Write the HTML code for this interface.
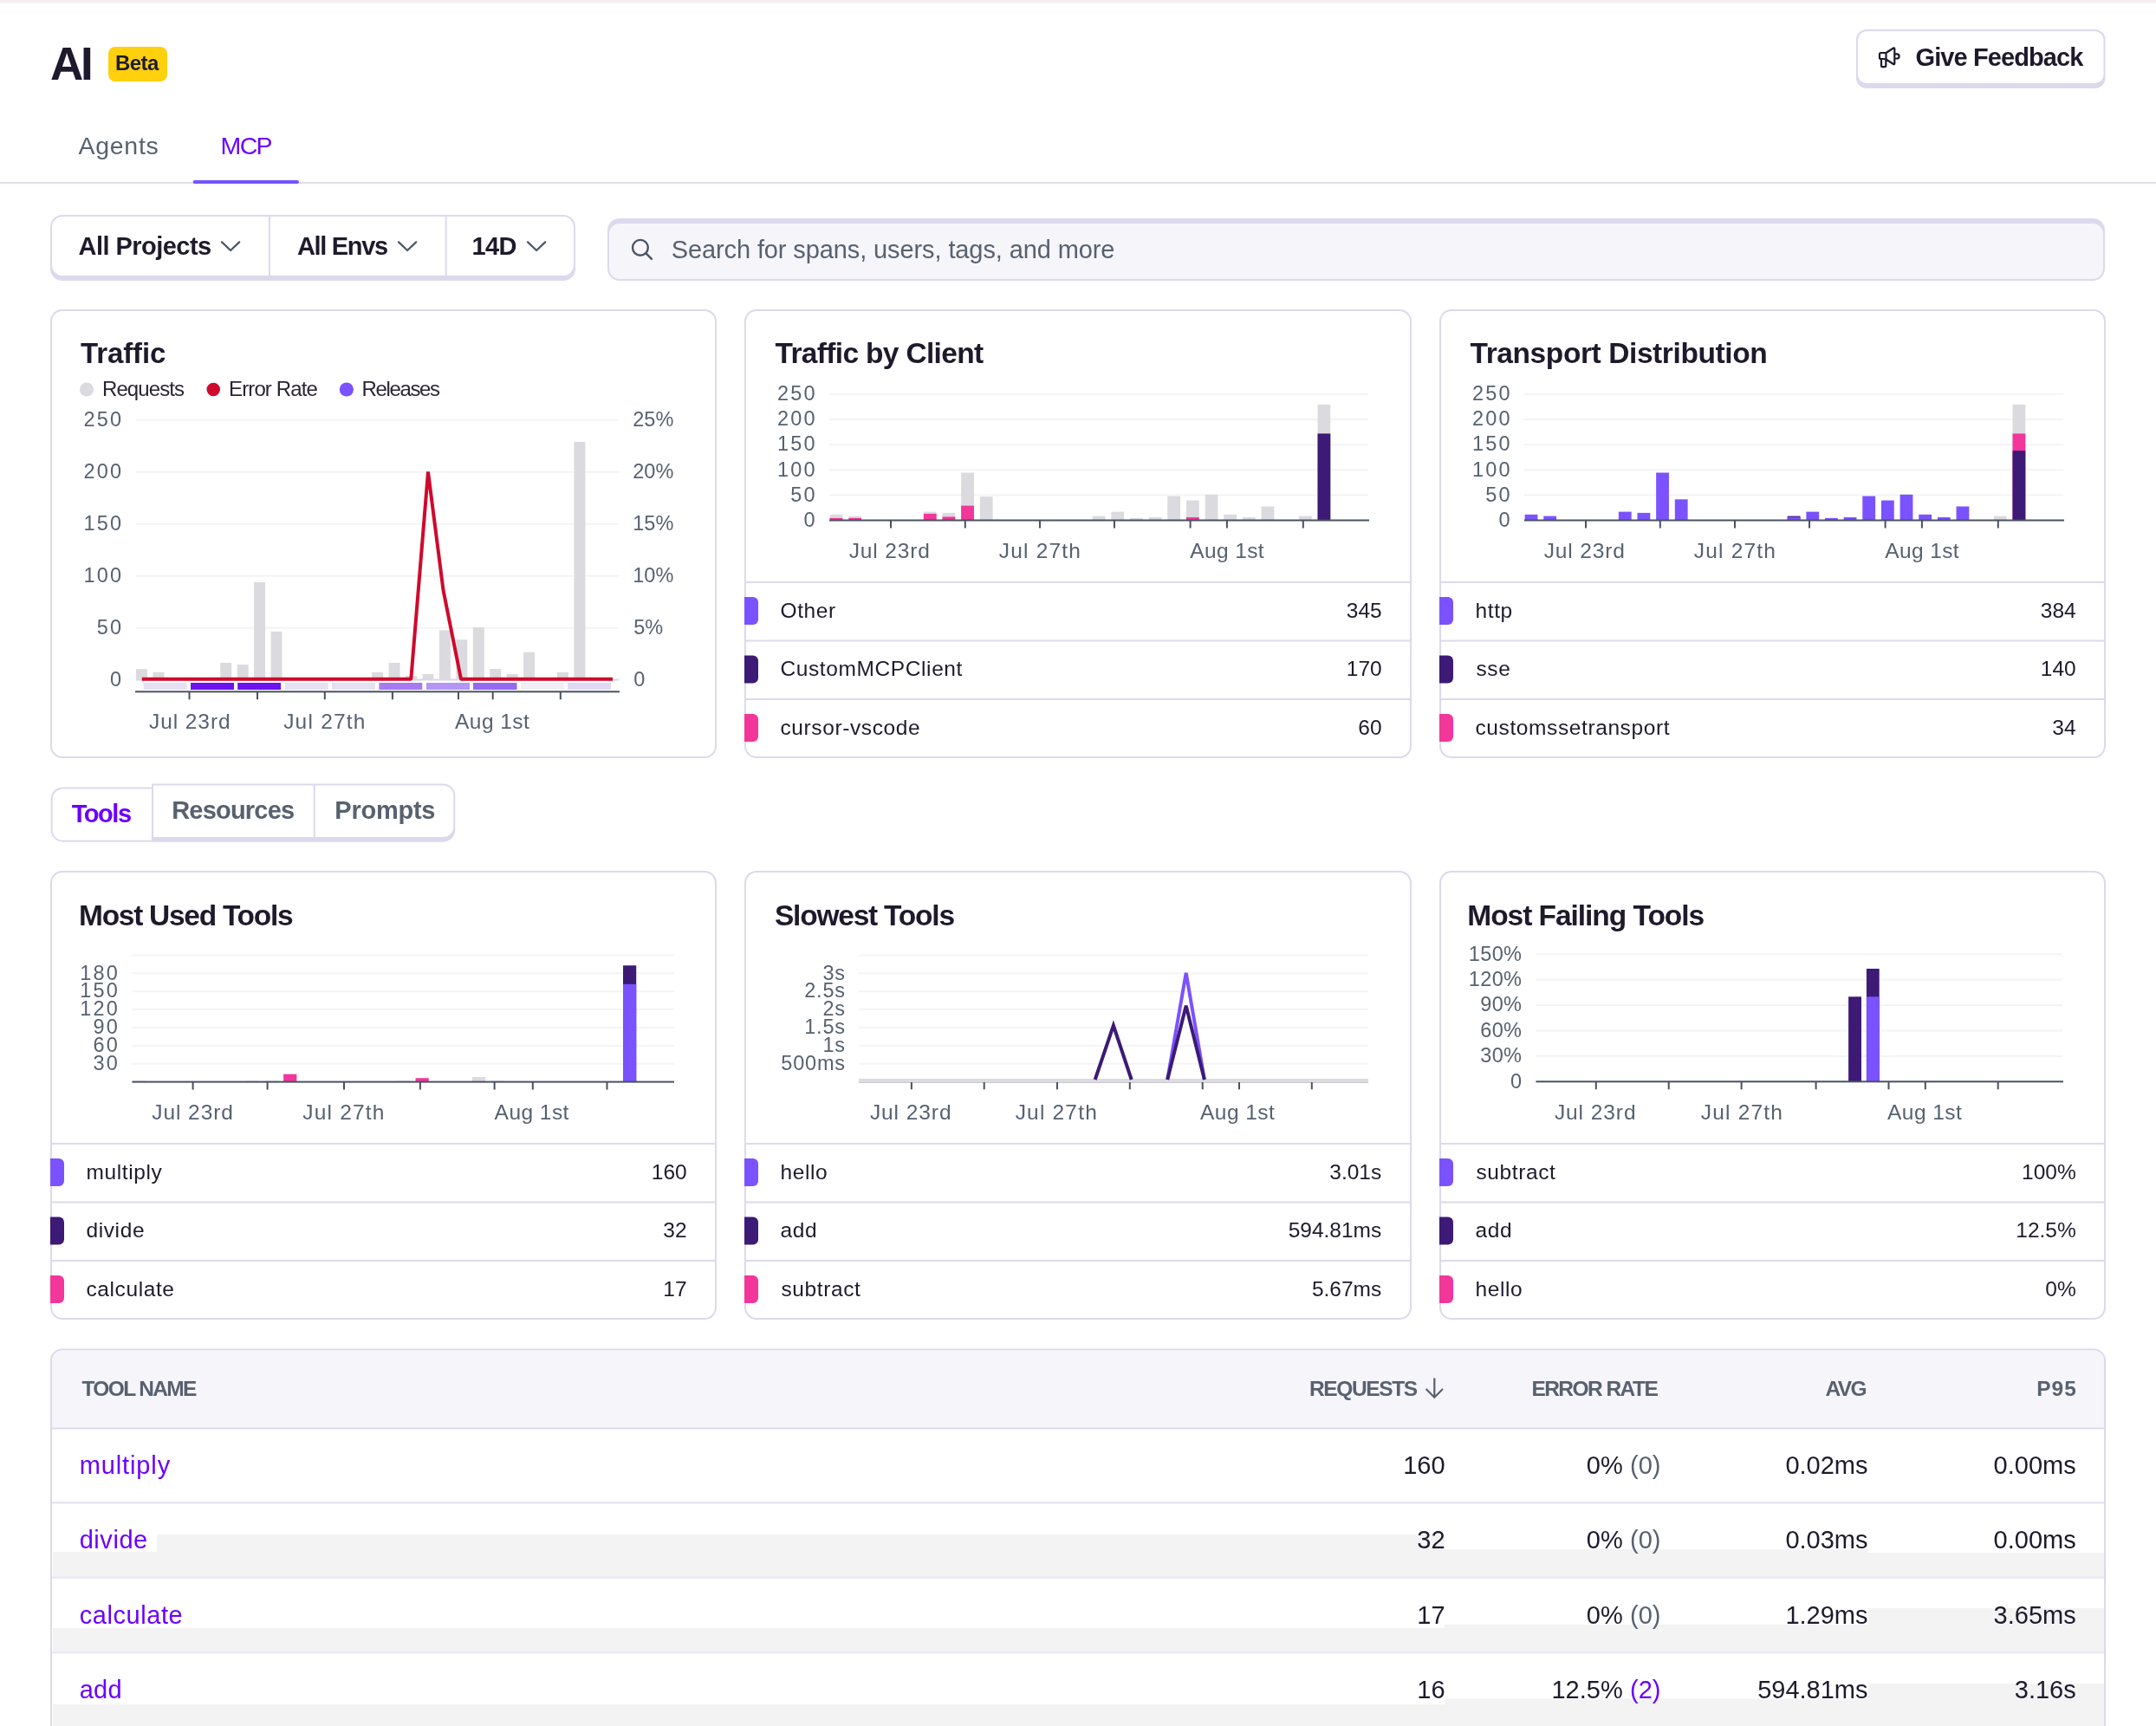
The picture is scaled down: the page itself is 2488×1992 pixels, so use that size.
<!DOCTYPE html>
<html><head><meta charset="utf-8"><title>AI MCP</title>
<style>
html,body{margin:0;padding:0;background:#fff;}
body{width:2488px;height:1992px;overflow:hidden;position:relative;font-family:"Liberation Sans", sans-serif;}
svg.bg{position:absolute;left:0;top:0;}
.t{position:absolute;left:0;top:0;width:2488px;height:1992px;will-change:transform;}
.t div{position:absolute;white-space:pre;}
</style></head><body>
<svg class="bg" width="2488" height="1992" viewBox="0 0 2488 1992">
<rect x="0.00" y="0.00" width="2488.00" height="2.00" rx="0" fill="#F8ECF0"/>
<rect x="0.00" y="2.00" width="2488.00" height="2.00" rx="0" fill="#F4F4F5"/>
<rect x="125.00" y="54.00" width="68.00" height="40.00" rx="8" fill="#FFD00E"/>
<rect x="2142.00" y="34.00" width="287.50" height="68.00" rx="12" fill="#DDD9EC"/>
<rect x="2144.00" y="36.00" width="283.50" height="60.00" rx="10" fill="#FFFFFF"/>
<path d="M2170.5,61 H2176.5 V68 H2170.5 A1.5,1.5 0 0 1 2169,66.5 V62.5 A1.5,1.5 0 0 1 2170.5,61 Z M2171,68 V76 A1.2,1.2 0 0 0 2172.2,77.2 H2175.1 A1.2,1.2 0 0 0 2176.3,76 V68 M2176.5,61 L2185,55.5 A0.9,0.9 0 0 1 2186.3,56.3 V73.3 A0.9,0.9 0 0 1 2185,74 L2176.5,68.5 M2186.3,62.3 H2189 A2.6,2.6 0 0 1 2189,67.5 H2186.3" fill="none" stroke="#1E1A2B" stroke-width="2.2" stroke-linejoin="round" stroke-linecap="round"/>
<rect x="0.00" y="210.00" width="2488.00" height="2.00" rx="0" fill="#E2DFEA"/>
<rect x="222.60" y="208.00" width="122.40" height="4.00" rx="2" fill="#7553FF"/>
<rect x="58.00" y="248.00" width="606.00" height="76.00" rx="14" fill="#DDD9EC"/>
<rect x="60.00" y="250.00" width="602.00" height="68.00" rx="12" fill="#FFFFFF"/>
<rect x="310.00" y="250.00" width="2.00" height="68.00" rx="0" fill="#DDD9EC"/>
<rect x="513.70" y="250.00" width="2.00" height="68.00" rx="0" fill="#DDD9EC"/>
<path d="M256.0,279.4 L266.1,289 L276.20000000000005,279.4" fill="none" stroke="#4F5866" stroke-width="2.3" stroke-linecap="round" stroke-linejoin="round"/>
<path d="M460.0,279.4 L470.1,289 L480.20000000000005,279.4" fill="none" stroke="#4F5866" stroke-width="2.3" stroke-linecap="round" stroke-linejoin="round"/>
<path d="M609.0,279.4 L619.1,289 L629.2,279.4" fill="none" stroke="#4F5866" stroke-width="2.3" stroke-linecap="round" stroke-linejoin="round"/>
<rect x="701.00" y="252.00" width="1728.00" height="72.00" rx="14" fill="#DDD9EC"/>
<rect x="703.00" y="258.00" width="1724.00" height="64.00" rx="12" fill="#F6F5FA"/>
<path d="M738.9,285.8 m-8.9,0 a8.9,8.9 0 1 0 17.8,0 a8.9,8.9 0 1 0 -17.8,0 M745.2,292.1 L752,298.9" fill="none" stroke="#4A5361" stroke-width="2.4" stroke-linecap="round"/>
<rect x="58.00" y="357.00" width="769.00" height="518.00" rx="14" fill="#DDD9EC"/>
<rect x="60.00" y="359.00" width="765.00" height="514.00" rx="12" fill="#FFFFFF"/>
<rect x="58.00" y="1005.00" width="769.00" height="518.00" rx="14" fill="#DDD9EC"/>
<rect x="60.00" y="1007.00" width="765.00" height="514.00" rx="12" fill="#FFFFFF"/>
<rect x="859.00" y="357.00" width="770.00" height="518.00" rx="14" fill="#DDD9EC"/>
<rect x="861.00" y="359.00" width="766.00" height="514.00" rx="12" fill="#FFFFFF"/>
<rect x="859.00" y="1005.00" width="770.00" height="518.00" rx="14" fill="#DDD9EC"/>
<rect x="861.00" y="1007.00" width="766.00" height="514.00" rx="12" fill="#FFFFFF"/>
<rect x="1661.00" y="357.00" width="769.00" height="518.00" rx="14" fill="#DDD9EC"/>
<rect x="1663.00" y="359.00" width="765.00" height="514.00" rx="12" fill="#FFFFFF"/>
<rect x="1661.00" y="1005.00" width="769.00" height="518.00" rx="14" fill="#DDD9EC"/>
<rect x="1663.00" y="1007.00" width="765.00" height="514.00" rx="12" fill="#FFFFFF"/>
<circle cx="100.0" cy="449.5" r="8.0" fill="#DBDBDF"/>
<circle cx="246.25" cy="449.5" r="7.75" fill="#CF0A2C"/>
<circle cx="399.9" cy="449.5" r="8.099999999999994" fill="#7B52FF"/>
<rect x="157.00" y="483.70" width="557.00" height="2.00" rx="0" fill="#F4F4F7"/>
<rect x="157.00" y="543.70" width="557.00" height="2.00" rx="0" fill="#F4F4F7"/>
<rect x="157.00" y="603.70" width="557.00" height="2.00" rx="0" fill="#F4F4F7"/>
<rect x="157.00" y="663.70" width="557.00" height="2.00" rx="0" fill="#F4F4F7"/>
<rect x="157.00" y="723.70" width="557.00" height="2.00" rx="0" fill="#F4F4F7"/>
<rect x="157.00" y="783.50" width="557.00" height="2.00" rx="0" fill="#D9D9DE"/>
<rect x="157.00" y="772.20" width="13.00" height="12.30" rx="0" fill="#DBDBDF"/>
<rect x="176.44" y="775.80" width="13.00" height="8.70" rx="0" fill="#DBDBDF"/>
<rect x="254.20" y="765.00" width="13.00" height="19.50" rx="0" fill="#DBDBDF"/>
<rect x="273.64" y="766.98" width="13.00" height="17.52" rx="0" fill="#DBDBDF"/>
<rect x="293.08" y="672.00" width="13.00" height="112.50" rx="0" fill="#DBDBDF"/>
<rect x="312.52" y="728.82" width="13.00" height="55.68" rx="0" fill="#DBDBDF"/>
<rect x="429.16" y="775.80" width="13.00" height="8.70" rx="0" fill="#DBDBDF"/>
<rect x="448.60" y="765.00" width="13.00" height="19.50" rx="0" fill="#DBDBDF"/>
<rect x="468.04" y="780.00" width="13.00" height="4.50" rx="0" fill="#DBDBDF"/>
<rect x="487.48" y="778.02" width="13.00" height="6.48" rx="0" fill="#DBDBDF"/>
<rect x="506.92" y="727.38" width="13.00" height="57.12" rx="0" fill="#DBDBDF"/>
<rect x="526.36" y="738.18" width="13.00" height="46.32" rx="0" fill="#DBDBDF"/>
<rect x="545.80" y="724.02" width="13.00" height="60.48" rx="0" fill="#DBDBDF"/>
<rect x="565.24" y="772.02" width="13.00" height="12.48" rx="0" fill="#DBDBDF"/>
<rect x="584.68" y="778.02" width="13.00" height="6.48" rx="0" fill="#DBDBDF"/>
<rect x="604.12" y="752.70" width="13.00" height="31.80" rx="0" fill="#DBDBDF"/>
<rect x="643.00" y="775.80" width="13.00" height="8.70" rx="0" fill="#DBDBDF"/>
<rect x="662.44" y="510.00" width="13.00" height="274.50" rx="0" fill="#DBDBDF"/>
<rect x="165.60" y="788.00" width="50.00" height="8.00" rx="0" fill="#E6E0F3"/>
<rect x="220.00" y="788.00" width="50.00" height="8.00" rx="0" fill="#6E12F0"/>
<rect x="274.20" y="788.00" width="49.90" height="8.00" rx="0" fill="#6E12F0"/>
<rect x="328.80" y="788.00" width="49.90" height="8.00" rx="0" fill="#E6E0F3"/>
<rect x="383.00" y="788.00" width="50.00" height="8.00" rx="0" fill="#E6E0F3"/>
<rect x="437.40" y="788.00" width="49.90" height="8.00" rx="0" fill="#A77AF2"/>
<rect x="492.00" y="788.00" width="50.00" height="8.00" rx="0" fill="#B596F4"/>
<rect x="546.00" y="788.00" width="50.50" height="8.00" rx="0" fill="#956AF1"/>
<rect x="601.00" y="788.00" width="50.00" height="8.00" rx="0" fill="#F1EEF7"/>
<rect x="655.00" y="788.00" width="50.00" height="8.00" rx="0" fill="#E2D8F6"/>
<rect x="156.00" y="797.30" width="559.00" height="2.00" rx="0" fill="#4A5260"/>
<rect x="217.50" y="798.30" width="2.00" height="9.00" rx="0" fill="#4A5260"/>
<rect x="296.00" y="798.30" width="2.00" height="9.00" rx="0" fill="#4A5260"/>
<rect x="373.80" y="798.30" width="2.00" height="9.00" rx="0" fill="#4A5260"/>
<rect x="451.90" y="798.30" width="2.00" height="9.00" rx="0" fill="#4A5260"/>
<rect x="528.00" y="798.30" width="2.00" height="9.00" rx="0" fill="#4A5260"/>
<rect x="567.70" y="798.30" width="2.00" height="9.00" rx="0" fill="#4A5260"/>
<rect x="645.80" y="798.30" width="2.00" height="9.00" rx="0" fill="#4A5260"/>
<path d="M163.8,783.8 L474.3,783.8 L494,544.5 L511.5,681 L532,783.8 L707,783.8" fill="none" stroke="#CF0A2C" stroke-width="4" stroke-linejoin="bevel"/>
<rect x="957.00" y="454.00" width="622.00" height="2.00" rx="0" fill="#F4F4F7"/>
<rect x="957.00" y="483.10" width="622.00" height="2.00" rx="0" fill="#F4F4F7"/>
<rect x="957.00" y="512.20" width="622.00" height="2.00" rx="0" fill="#F4F4F7"/>
<rect x="957.00" y="541.30" width="622.00" height="2.00" rx="0" fill="#F4F4F7"/>
<rect x="957.00" y="570.40" width="622.00" height="2.00" rx="0" fill="#F4F4F7"/>
<rect x="957.60" y="593.81" width="14.80" height="6.69" rx="0" fill="#DBDBDF"/>
<rect x="957.60" y="597.88" width="14.80" height="2.62" rx="0" fill="#F2369A"/>
<rect x="979.25" y="595.61" width="14.80" height="4.89" rx="0" fill="#DBDBDF"/>
<rect x="979.25" y="597.88" width="14.80" height="2.62" rx="0" fill="#F2369A"/>
<rect x="1065.85" y="590.61" width="14.80" height="9.89" rx="0" fill="#DBDBDF"/>
<rect x="1065.85" y="592.93" width="14.80" height="7.57" rx="0" fill="#F2369A"/>
<rect x="1087.50" y="591.89" width="14.80" height="8.61" rx="0" fill="#DBDBDF"/>
<rect x="1087.50" y="596.43" width="14.80" height="4.07" rx="0" fill="#F2369A"/>
<rect x="1109.15" y="545.50" width="14.80" height="55.00" rx="0" fill="#DBDBDF"/>
<rect x="1109.15" y="583.62" width="14.80" height="16.88" rx="0" fill="#F2369A"/>
<rect x="1130.80" y="573.15" width="14.80" height="27.35" rx="0" fill="#DBDBDF"/>
<rect x="1260.70" y="595.61" width="14.80" height="4.89" rx="0" fill="#DBDBDF"/>
<rect x="1282.35" y="590.61" width="14.80" height="9.89" rx="0" fill="#DBDBDF"/>
<rect x="1304.00" y="597.88" width="14.80" height="2.62" rx="0" fill="#DBDBDF"/>
<rect x="1325.65" y="597.01" width="14.80" height="3.49" rx="0" fill="#DBDBDF"/>
<rect x="1347.30" y="572.56" width="14.80" height="27.94" rx="0" fill="#DBDBDF"/>
<rect x="1368.95" y="577.51" width="14.80" height="22.99" rx="0" fill="#DBDBDF"/>
<rect x="1368.95" y="597.01" width="14.80" height="3.49" rx="0" fill="#F2369A"/>
<rect x="1390.60" y="570.82" width="14.80" height="29.68" rx="0" fill="#DBDBDF"/>
<rect x="1412.25" y="593.81" width="14.80" height="6.69" rx="0" fill="#DBDBDF"/>
<rect x="1433.90" y="597.01" width="14.80" height="3.49" rx="0" fill="#DBDBDF"/>
<rect x="1455.55" y="584.50" width="14.80" height="16.00" rx="0" fill="#DBDBDF"/>
<rect x="1498.85" y="595.61" width="14.80" height="4.89" rx="0" fill="#DBDBDF"/>
<rect x="1520.50" y="466.93" width="14.80" height="133.57" rx="0" fill="#DBDBDF"/>
<rect x="1520.50" y="500.40" width="14.80" height="100.10" rx="0" fill="#3C1A75"/>
<rect x="957.00" y="599.50" width="623.00" height="2.00" rx="0" fill="#4A5260"/>
<rect x="1027.00" y="600.50" width="2.00" height="9.00" rx="0" fill="#4A5260"/>
<rect x="1112.80" y="600.50" width="2.00" height="9.00" rx="0" fill="#4A5260"/>
<rect x="1199.00" y="600.50" width="2.00" height="9.00" rx="0" fill="#4A5260"/>
<rect x="1285.00" y="600.50" width="2.00" height="9.00" rx="0" fill="#4A5260"/>
<rect x="1372.60" y="600.50" width="2.00" height="9.00" rx="0" fill="#4A5260"/>
<rect x="1414.90" y="600.50" width="2.00" height="9.00" rx="0" fill="#4A5260"/>
<rect x="1502.80" y="600.50" width="2.00" height="9.00" rx="0" fill="#4A5260"/>
<rect x="861.00" y="671.00" width="766.00" height="2.00" rx="0" fill="#DDD9EC"/>
<path d="M859,689.0 h10 a6,6 0 0 1 6,6 v20 a6,6 0 0 1 -6,6 h-10 z" fill="#7B52FF" />
<rect x="861.00" y="738.50" width="766.00" height="2.00" rx="0" fill="#DDD9EC"/>
<path d="M859,756.5 h10 a6,6 0 0 1 6,6 v20 a6,6 0 0 1 -6,6 h-10 z" fill="#3C1A75" />
<rect x="861.00" y="806.00" width="766.00" height="2.00" rx="0" fill="#DDD9EC"/>
<path d="M859,824.0 h10 a6,6 0 0 1 6,6 v20 a6,6 0 0 1 -6,6 h-10 z" fill="#F2369A" />
<rect x="1759.00" y="454.00" width="622.00" height="2.00" rx="0" fill="#F4F4F7"/>
<rect x="1759.00" y="483.10" width="622.00" height="2.00" rx="0" fill="#F4F4F7"/>
<rect x="1759.00" y="512.20" width="622.00" height="2.00" rx="0" fill="#F4F4F7"/>
<rect x="1759.00" y="541.30" width="622.00" height="2.00" rx="0" fill="#F4F4F7"/>
<rect x="1759.00" y="570.40" width="622.00" height="2.00" rx="0" fill="#F4F4F7"/>
<rect x="1759.60" y="593.81" width="14.80" height="6.69" rx="0" fill="#7B52FF"/>
<rect x="1781.25" y="595.61" width="14.80" height="4.89" rx="0" fill="#7B52FF"/>
<rect x="1867.85" y="590.61" width="14.80" height="9.89" rx="0" fill="#7B52FF"/>
<rect x="1889.50" y="591.89" width="14.80" height="8.61" rx="0" fill="#7B52FF"/>
<rect x="1911.15" y="545.50" width="14.80" height="55.00" rx="0" fill="#7B52FF"/>
<rect x="1932.80" y="576.29" width="14.80" height="24.21" rx="0" fill="#7B52FF"/>
<rect x="2062.70" y="595.61" width="14.80" height="4.89" rx="0" fill="#3C1A75"/>
<rect x="2062.70" y="596.72" width="14.80" height="3.78" rx="0" fill="#7B52FF"/>
<rect x="2084.35" y="590.61" width="14.80" height="9.89" rx="0" fill="#7B52FF"/>
<rect x="2106.00" y="597.88" width="14.80" height="2.62" rx="0" fill="#7B52FF"/>
<rect x="2127.65" y="597.01" width="14.80" height="3.49" rx="0" fill="#7B52FF"/>
<rect x="2149.30" y="572.56" width="14.80" height="27.94" rx="0" fill="#7B52FF"/>
<rect x="2170.95" y="577.51" width="14.80" height="22.99" rx="0" fill="#7B52FF"/>
<rect x="2192.60" y="570.82" width="14.80" height="29.68" rx="0" fill="#7B52FF"/>
<rect x="2214.25" y="593.81" width="14.80" height="6.69" rx="0" fill="#7B52FF"/>
<rect x="2235.90" y="597.01" width="14.80" height="3.49" rx="0" fill="#7B52FF"/>
<rect x="2257.55" y="584.50" width="14.80" height="16.00" rx="0" fill="#7B52FF"/>
<rect x="2300.85" y="595.61" width="14.80" height="4.89" rx="0" fill="#DBDBDF"/>
<rect x="2322.50" y="466.93" width="14.80" height="133.57" rx="0" fill="#DBDBDF"/>
<rect x="2322.50" y="500.40" width="14.80" height="100.10" rx="0" fill="#F2369A"/>
<rect x="2322.50" y="520.18" width="14.80" height="80.32" rx="0" fill="#3C1A75"/>
<rect x="1759.00" y="599.50" width="623.00" height="2.00" rx="0" fill="#4A5260"/>
<rect x="1829.00" y="600.50" width="2.00" height="9.00" rx="0" fill="#4A5260"/>
<rect x="1914.80" y="600.50" width="2.00" height="9.00" rx="0" fill="#4A5260"/>
<rect x="2001.00" y="600.50" width="2.00" height="9.00" rx="0" fill="#4A5260"/>
<rect x="2087.00" y="600.50" width="2.00" height="9.00" rx="0" fill="#4A5260"/>
<rect x="2174.60" y="600.50" width="2.00" height="9.00" rx="0" fill="#4A5260"/>
<rect x="2216.90" y="600.50" width="2.00" height="9.00" rx="0" fill="#4A5260"/>
<rect x="2304.80" y="600.50" width="2.00" height="9.00" rx="0" fill="#4A5260"/>
<rect x="1663.00" y="671.00" width="765.00" height="2.00" rx="0" fill="#DDD9EC"/>
<path d="M1661,689.0 h10 a6,6 0 0 1 6,6 v20 a6,6 0 0 1 -6,6 h-10 z" fill="#7B52FF" />
<rect x="1663.00" y="738.50" width="765.00" height="2.00" rx="0" fill="#DDD9EC"/>
<path d="M1661,756.5 h10 a6,6 0 0 1 6,6 v20 a6,6 0 0 1 -6,6 h-10 z" fill="#3C1A75" />
<rect x="1663.00" y="806.00" width="765.00" height="2.00" rx="0" fill="#DDD9EC"/>
<path d="M1661,824.0 h10 a6,6 0 0 1 6,6 v20 a6,6 0 0 1 -6,6 h-10 z" fill="#F2369A" />
<path d="M177,908.5 H72.6 a14,14 0 0 0 -14,14 V957.7 a14,14 0 0 0 14,14 H177 Z" fill="#DDD9EC" />
<path d="M175,910.5 H72.6 a12,12 0 0 0 -12,12 V957.7 a12,12 0 0 0 12,12 H175 Z" fill="#FFFFFF" />
<path d="M175,904.4 H511.3 a14,14 0 0 1 14,14 V957.7 a14,14 0 0 1 -14,14 H175 Z" fill="#DDD9EC" />
<path d="M177,906.4 H511.3 a12,12 0 0 1 12,12 V954 a12,12 0 0 1 -12,12 H177 Z" fill="#FFFFFF" />
<rect x="361.70" y="906.00" width="2.00" height="60.00" rx="0" fill="#DDD9EC"/>
<rect x="152.40" y="1101.44" width="625.30" height="2.00" rx="0" fill="#F4F4F7"/>
<rect x="152.40" y="1122.32" width="625.30" height="2.00" rx="0" fill="#F4F4F7"/>
<rect x="152.40" y="1143.20" width="625.30" height="2.00" rx="0" fill="#F4F4F7"/>
<rect x="152.40" y="1164.08" width="625.30" height="2.00" rx="0" fill="#F4F4F7"/>
<rect x="152.40" y="1184.96" width="625.30" height="2.00" rx="0" fill="#F4F4F7"/>
<rect x="152.40" y="1205.84" width="625.30" height="2.00" rx="0" fill="#F4F4F7"/>
<rect x="152.40" y="1226.72" width="625.30" height="2.00" rx="0" fill="#F4F4F7"/>
<rect x="153.00" y="1247.56" width="15.20" height="1.04" rx="0" fill="#DBDBDF"/>
<rect x="283.62" y="1247.56" width="15.20" height="1.04" rx="0" fill="#DBDBDF"/>
<rect x="305.39" y="1247.56" width="15.20" height="1.04" rx="0" fill="#DBDBDF"/>
<rect x="327.16" y="1239.69" width="15.20" height="8.91" rx="0" fill="#F2369A"/>
<rect x="457.78" y="1247.56" width="15.20" height="1.04" rx="0" fill="#DBDBDF"/>
<rect x="479.55" y="1244.22" width="15.20" height="4.38" rx="0" fill="#F2369A"/>
<rect x="544.86" y="1243.03" width="15.20" height="5.57" rx="0" fill="#DBDBDF"/>
<rect x="566.63" y="1247.56" width="15.20" height="1.04" rx="0" fill="#DBDBDF"/>
<rect x="719.02" y="1114.27" width="15.20" height="134.33" rx="0" fill="#3C1A75"/>
<rect x="719.02" y="1135.85" width="15.20" height="112.75" rx="0" fill="#7B52FF"/>
<rect x="152.40" y="1247.60" width="625.60" height="2.00" rx="0" fill="#4A5260"/>
<rect x="221.60" y="1248.60" width="2.00" height="9.00" rx="0" fill="#4A5260"/>
<rect x="307.60" y="1248.60" width="2.00" height="9.00" rx="0" fill="#4A5260"/>
<rect x="396.00" y="1248.60" width="2.00" height="9.00" rx="0" fill="#4A5260"/>
<rect x="483.90" y="1248.60" width="2.00" height="9.00" rx="0" fill="#4A5260"/>
<rect x="569.60" y="1248.60" width="2.00" height="9.00" rx="0" fill="#4A5260"/>
<rect x="613.80" y="1248.60" width="2.00" height="9.00" rx="0" fill="#4A5260"/>
<rect x="699.50" y="1248.60" width="2.00" height="9.00" rx="0" fill="#4A5260"/>
<rect x="60.00" y="1319.00" width="765.00" height="2.00" rx="0" fill="#DDD9EC"/>
<path d="M58,1337.0 h10 a6,6 0 0 1 6,6 v20 a6,6 0 0 1 -6,6 h-10 z" fill="#7B52FF" />
<rect x="60.00" y="1386.50" width="765.00" height="2.00" rx="0" fill="#DDD9EC"/>
<path d="M58,1404.5 h10 a6,6 0 0 1 6,6 v20 a6,6 0 0 1 -6,6 h-10 z" fill="#3C1A75" />
<rect x="60.00" y="1454.00" width="765.00" height="2.00" rx="0" fill="#DDD9EC"/>
<path d="M58,1472.0 h10 a6,6 0 0 1 6,6 v20 a6,6 0 0 1 -6,6 h-10 z" fill="#F2369A" />
<rect x="991.00" y="1101.44" width="588.00" height="2.00" rx="0" fill="#F4F4F7"/>
<rect x="991.00" y="1122.32" width="588.00" height="2.00" rx="0" fill="#F4F4F7"/>
<rect x="991.00" y="1143.20" width="588.00" height="2.00" rx="0" fill="#F4F4F7"/>
<rect x="991.00" y="1164.08" width="588.00" height="2.00" rx="0" fill="#F4F4F7"/>
<rect x="991.00" y="1184.96" width="588.00" height="2.00" rx="0" fill="#F4F4F7"/>
<rect x="991.00" y="1205.84" width="588.00" height="2.00" rx="0" fill="#F4F4F7"/>
<rect x="991.00" y="1226.72" width="588.00" height="2.00" rx="0" fill="#F4F4F7"/>
<rect x="991.00" y="1247.30" width="588.00" height="2.00" rx="0" fill="#4A5260"/>
<rect x="1050.90" y="1248.30" width="2.00" height="9.00" rx="0" fill="#4A5260"/>
<rect x="1134.70" y="1248.30" width="2.00" height="9.00" rx="0" fill="#4A5260"/>
<rect x="1219.00" y="1248.30" width="2.00" height="9.00" rx="0" fill="#4A5260"/>
<rect x="1302.80" y="1248.30" width="2.00" height="9.00" rx="0" fill="#4A5260"/>
<rect x="1386.70" y="1248.30" width="2.00" height="9.00" rx="0" fill="#4A5260"/>
<rect x="1429.00" y="1248.30" width="2.00" height="9.00" rx="0" fill="#4A5260"/>
<rect x="1512.80" y="1248.30" width="2.00" height="9.00" rx="0" fill="#4A5260"/>
<rect x="991.00" y="1245.00" width="588.00" height="4.00" rx="0" fill="#DCDCE0"/>
<path d="M1347.2,1246 L1368.7,1122.8 L1389.9,1246" fill="none" stroke="#7B52FF" stroke-width="4" />
<path d="M1263.7,1246 L1284.9,1183.5 L1305.7,1246" fill="none" stroke="#3C1A75" stroke-width="4" />
<path d="M1347.2,1246 L1368.7,1160.7 L1389.9,1246" fill="none" stroke="#3C1A75" stroke-width="4" />
<rect x="861.00" y="1319.00" width="766.00" height="2.00" rx="0" fill="#DDD9EC"/>
<path d="M859,1337.0 h10 a6,6 0 0 1 6,6 v20 a6,6 0 0 1 -6,6 h-10 z" fill="#7B52FF" />
<rect x="861.00" y="1386.50" width="766.00" height="2.00" rx="0" fill="#DDD9EC"/>
<path d="M859,1404.5 h10 a6,6 0 0 1 6,6 v20 a6,6 0 0 1 -6,6 h-10 z" fill="#3C1A75" />
<rect x="861.00" y="1454.00" width="766.00" height="2.00" rx="0" fill="#DDD9EC"/>
<path d="M859,1472.0 h10 a6,6 0 0 1 6,6 v20 a6,6 0 0 1 -6,6 h-10 z" fill="#F2369A" />
<rect x="1772.40" y="1100.30" width="607.80" height="2.00" rx="0" fill="#F4F4F7"/>
<rect x="1772.40" y="1129.70" width="607.80" height="2.00" rx="0" fill="#F4F4F7"/>
<rect x="1772.40" y="1159.10" width="607.80" height="2.00" rx="0" fill="#F4F4F7"/>
<rect x="1772.40" y="1188.50" width="607.80" height="2.00" rx="0" fill="#F4F4F7"/>
<rect x="1772.40" y="1217.90" width="607.80" height="2.00" rx="0" fill="#F4F4F7"/>
<rect x="2133.10" y="1150.30" width="14.90" height="98.00" rx="0" fill="#3C1A75"/>
<rect x="2153.90" y="1118.00" width="14.80" height="130.30" rx="0" fill="#3C1A75"/>
<rect x="2153.90" y="1150.30" width="14.80" height="98.00" rx="0" fill="#7B52FF"/>
<rect x="1772.40" y="1247.30" width="608.60" height="2.00" rx="0" fill="#4A5260"/>
<rect x="1840.80" y="1248.30" width="2.00" height="9.00" rx="0" fill="#4A5260"/>
<rect x="1924.70" y="1248.30" width="2.00" height="9.00" rx="0" fill="#4A5260"/>
<rect x="2008.60" y="1248.30" width="2.00" height="9.00" rx="0" fill="#4A5260"/>
<rect x="2094.60" y="1248.30" width="2.00" height="9.00" rx="0" fill="#4A5260"/>
<rect x="2178.50" y="1248.30" width="2.00" height="9.00" rx="0" fill="#4A5260"/>
<rect x="2220.80" y="1248.30" width="2.00" height="9.00" rx="0" fill="#4A5260"/>
<rect x="2304.70" y="1248.30" width="2.00" height="9.00" rx="0" fill="#4A5260"/>
<rect x="1663.00" y="1319.00" width="765.00" height="2.00" rx="0" fill="#DDD9EC"/>
<path d="M1661,1337.0 h10 a6,6 0 0 1 6,6 v20 a6,6 0 0 1 -6,6 h-10 z" fill="#7B52FF" />
<rect x="1663.00" y="1386.50" width="765.00" height="2.00" rx="0" fill="#DDD9EC"/>
<path d="M1661,1404.5 h10 a6,6 0 0 1 6,6 v20 a6,6 0 0 1 -6,6 h-10 z" fill="#3C1A75" />
<rect x="1663.00" y="1454.00" width="765.00" height="2.00" rx="0" fill="#DDD9EC"/>
<path d="M1661,1472.0 h10 a6,6 0 0 1 6,6 v20 a6,6 0 0 1 -6,6 h-10 z" fill="#F2369A" />
<rect x="58.00" y="1556.50" width="2372.00" height="543.50" rx="14" fill="#DDD9EC"/>
<rect x="60.00" y="1558.50" width="2368.00" height="541.50" rx="12" fill="#FFFFFF"/>
<path d="M60,1647.5 V1570.5 a12,12 0 0 1 12,-12 H2416 a12,12 0 0 1 12,12 V1647.5 Z" fill="#F6F5FA" />
<rect x="60.00" y="1647.50" width="2368.00" height="2.00" rx="0" fill="#DDD9EC"/>
<rect x="61.00" y="1791.00" width="120.00" height="29.00" rx="0" fill="#F3F3F4"/>
<rect x="181.00" y="1771.00" width="1486.00" height="49.00" rx="0" fill="#F3F3F4"/>
<rect x="1667.00" y="1788.00" width="489.00" height="32.00" rx="0" fill="#F3F3F4"/>
<rect x="2156.00" y="1792.00" width="272.00" height="28.00" rx="0" fill="#F3F3F4"/>
<rect x="61.00" y="1879.00" width="1606.00" height="27.00" rx="0" fill="#F3F3F4"/>
<rect x="1667.00" y="1875.00" width="489.00" height="31.00" rx="0" fill="#F3F3F4"/>
<rect x="2156.00" y="1856.00" width="272.00" height="50.00" rx="0" fill="#F3F3F4"/>
<rect x="61.00" y="1967.00" width="1606.00" height="25.00" rx="0" fill="#F3F3F4"/>
<rect x="1667.00" y="1960.50" width="489.00" height="31.50" rx="0" fill="#F3F3F4"/>
<rect x="2156.00" y="1943.00" width="272.00" height="49.00" rx="0" fill="#F3F3F4"/>
<rect x="60.00" y="1733.30" width="2368.00" height="2.00" rx="0" fill="#E3E0EE"/>
<rect x="60.00" y="1819.80" width="2368.00" height="2.00" rx="0" fill="#E9E6F4"/>
<rect x="60.00" y="1906.20" width="2368.00" height="2.00" rx="0" fill="#E9E6F4"/>
<path d="M1655.3,1590.5 V1612.5 M1645.6,1603 L1655.3,1612.7 L1665,1603" fill="none" stroke="#58616F" stroke-width="2.2" />
</svg>
<div class="t">
<div style="left:58.00px;top:47.14px;font-size:53.0px;line-height:53.0px;font-weight:700;color:#1E1A2B;letter-spacing:-3.275px">AI</div>
<div style="left:133.00px;top:61.28px;font-size:24.0px;line-height:24.0px;font-weight:700;color:#1E1A2B;letter-spacing:-0.557px">Beta</div>
<div style="left:2210.50px;top:52.25px;font-size:29.0px;line-height:29.0px;font-weight:700;color:#1E1A2B;letter-spacing:-0.899px">Give Feedback</div>
<div style="left:90.50px;top:153.87px;font-size:28.5px;line-height:28.5px;font-weight:400;color:#58616F;letter-spacing:0.704px">Agents</div>
<div style="left:254.60px;top:153.87px;font-size:28.5px;line-height:28.5px;font-weight:400;color:#6A00FF;letter-spacing:-1.661px">MCP</div>
<div style="left:90.50px;top:269.75px;font-size:29.0px;line-height:29.0px;font-weight:700;color:#1E1A2B;letter-spacing:-0.539px">All Projects</div>
<div style="left:343.00px;top:269.75px;font-size:29.0px;line-height:29.0px;font-weight:700;color:#1E1A2B;letter-spacing:-1.329px">All Envs</div>
<div style="left:544.60px;top:269.75px;font-size:29.0px;line-height:29.0px;font-weight:700;color:#1E1A2B;letter-spacing:-0.628px">14D</div>
<div style="left:774.70px;top:274.45px;font-size:29.0px;line-height:29.0px;font-weight:400;color:#58616F;letter-spacing:-0.107px">Search for spans, users, tags, and more</div>
<div style="left:93.00px;top:391.07px;font-size:33.0px;line-height:33.0px;font-weight:700;color:#1E1A2B;letter-spacing:-0.113px">Traffic</div>
<div style="left:118.00px;top:437.28px;font-size:24.0px;line-height:24.0px;font-weight:400;color:#2A2433;letter-spacing:-0.913px">Requests</div>
<div style="left:264.00px;top:437.28px;font-size:24.0px;line-height:24.0px;font-weight:400;color:#2A2433;letter-spacing:-0.872px">Error Rate</div>
<div style="left:417.50px;top:437.28px;font-size:24.0px;line-height:24.0px;font-weight:400;color:#2A2433;letter-spacing:-1.365px">Releases</div>
<div style="left:96.46px;top:472.96px;font-size:23.5px;line-height:23.5px;font-weight:400;color:#58616F;letter-spacing:2.200px">250</div>
<div style="left:96.46px;top:532.96px;font-size:23.5px;line-height:23.5px;font-weight:400;color:#58616F;letter-spacing:2.200px">200</div>
<div style="left:96.46px;top:592.96px;font-size:23.5px;line-height:23.5px;font-weight:400;color:#58616F;letter-spacing:2.200px">150</div>
<div style="left:96.46px;top:652.96px;font-size:23.5px;line-height:23.5px;font-weight:400;color:#58616F;letter-spacing:2.200px">100</div>
<div style="left:111.73px;top:712.96px;font-size:23.5px;line-height:23.5px;font-weight:400;color:#58616F;letter-spacing:2.200px">50</div>
<div style="left:127.00px;top:772.96px;font-size:23.5px;line-height:23.5px;font-weight:400;color:#58616F;letter-spacing:2.200px">0</div>
<div style="left:730.30px;top:472.96px;font-size:23.5px;line-height:23.5px;font-weight:400;color:#58616F;letter-spacing:0.000px">25%</div>
<div style="left:730.30px;top:532.96px;font-size:23.5px;line-height:23.5px;font-weight:400;color:#58616F;letter-spacing:0.000px">20%</div>
<div style="left:730.30px;top:592.96px;font-size:23.5px;line-height:23.5px;font-weight:400;color:#58616F;letter-spacing:0.000px">15%</div>
<div style="left:730.30px;top:652.96px;font-size:23.5px;line-height:23.5px;font-weight:400;color:#58616F;letter-spacing:0.000px">10%</div>
<div style="left:731.30px;top:712.96px;font-size:23.5px;line-height:23.5px;font-weight:400;color:#58616F;letter-spacing:0.000px">5%</div>
<div style="left:731.30px;top:772.96px;font-size:23.5px;line-height:23.5px;font-weight:400;color:#58616F;letter-spacing:0.000px">0</div>
<div style="left:172.00px;top:820.96px;font-size:24.5px;line-height:24.5px;font-weight:400;color:#58616F;letter-spacing:0.923px">Jul 23rd</div>
<div style="left:327.15px;top:820.96px;font-size:24.5px;line-height:24.5px;font-weight:400;color:#58616F;letter-spacing:1.217px">Jul 27th</div>
<div style="left:525.00px;top:820.96px;font-size:24.5px;line-height:24.5px;font-weight:400;color:#58616F;letter-spacing:0.454px">Aug 1st</div>
<div style="left:894.50px;top:391.04px;font-size:33.5px;line-height:33.5px;font-weight:700;color:#1E1A2B;letter-spacing:-0.665px">Traffic by Client</div>
<div style="left:896.96px;top:443.26px;font-size:23.5px;line-height:23.5px;font-weight:400;color:#58616F;letter-spacing:2.200px">250</div>
<div style="left:896.96px;top:472.36px;font-size:23.5px;line-height:23.5px;font-weight:400;color:#58616F;letter-spacing:2.200px">200</div>
<div style="left:896.96px;top:501.46px;font-size:23.5px;line-height:23.5px;font-weight:400;color:#58616F;letter-spacing:2.200px">150</div>
<div style="left:896.96px;top:530.56px;font-size:23.5px;line-height:23.5px;font-weight:400;color:#58616F;letter-spacing:2.200px">100</div>
<div style="left:912.23px;top:559.66px;font-size:23.5px;line-height:23.5px;font-weight:400;color:#58616F;letter-spacing:2.200px">50</div>
<div style="left:927.50px;top:588.76px;font-size:23.5px;line-height:23.5px;font-weight:400;color:#58616F;letter-spacing:2.200px">0</div>
<div style="left:979.65px;top:624.26px;font-size:24.5px;line-height:24.5px;font-weight:400;color:#58616F;letter-spacing:0.881px">Jul 23rd</div>
<div style="left:1152.85px;top:624.26px;font-size:24.5px;line-height:24.5px;font-weight:400;color:#58616F;letter-spacing:1.188px">Jul 27th</div>
<div style="left:1373.25px;top:624.26px;font-size:24.5px;line-height:24.5px;font-weight:400;color:#58616F;letter-spacing:0.371px">Aug 1st</div>
<div style="left:900.50px;top:692.76px;font-size:24.5px;line-height:24.5px;font-weight:400;color:#1E1A2B;letter-spacing:0.600px">Other</div>
<div style="left:1553.75px;top:692.76px;font-size:24.5px;line-height:24.5px;font-weight:400;color:#1E1A2B;letter-spacing:0.000px">345</div>
<div style="left:900.50px;top:760.26px;font-size:24.5px;line-height:24.5px;font-weight:400;color:#1E1A2B;letter-spacing:0.600px">CustomMCPClient</div>
<div style="left:1553.75px;top:760.26px;font-size:24.5px;line-height:24.5px;font-weight:400;color:#1E1A2B;letter-spacing:0.000px">170</div>
<div style="left:900.50px;top:827.76px;font-size:24.5px;line-height:24.5px;font-weight:400;color:#1E1A2B;letter-spacing:0.600px">cursor-vscode</div>
<div style="left:1567.37px;top:827.76px;font-size:24.5px;line-height:24.5px;font-weight:400;color:#1E1A2B;letter-spacing:0.000px">60</div>
<div style="left:1696.50px;top:391.04px;font-size:33.5px;line-height:33.5px;font-weight:700;color:#1E1A2B;letter-spacing:-0.409px">Transport Distribution</div>
<div style="left:1698.96px;top:443.26px;font-size:23.5px;line-height:23.5px;font-weight:400;color:#58616F;letter-spacing:2.200px">250</div>
<div style="left:1698.96px;top:472.36px;font-size:23.5px;line-height:23.5px;font-weight:400;color:#58616F;letter-spacing:2.200px">200</div>
<div style="left:1698.96px;top:501.46px;font-size:23.5px;line-height:23.5px;font-weight:400;color:#58616F;letter-spacing:2.200px">150</div>
<div style="left:1698.96px;top:530.56px;font-size:23.5px;line-height:23.5px;font-weight:400;color:#58616F;letter-spacing:2.200px">100</div>
<div style="left:1714.23px;top:559.66px;font-size:23.5px;line-height:23.5px;font-weight:400;color:#58616F;letter-spacing:2.200px">50</div>
<div style="left:1729.50px;top:588.76px;font-size:23.5px;line-height:23.5px;font-weight:400;color:#58616F;letter-spacing:2.200px">0</div>
<div style="left:1781.65px;top:624.26px;font-size:24.5px;line-height:24.5px;font-weight:400;color:#58616F;letter-spacing:0.881px">Jul 23rd</div>
<div style="left:1954.85px;top:624.26px;font-size:24.5px;line-height:24.5px;font-weight:400;color:#58616F;letter-spacing:1.188px">Jul 27th</div>
<div style="left:2175.25px;top:624.26px;font-size:24.5px;line-height:24.5px;font-weight:400;color:#58616F;letter-spacing:0.371px">Aug 1st</div>
<div style="left:1702.50px;top:692.76px;font-size:24.5px;line-height:24.5px;font-weight:400;color:#1E1A2B;letter-spacing:0.600px">http</div>
<div style="left:2354.75px;top:692.76px;font-size:24.5px;line-height:24.5px;font-weight:400;color:#1E1A2B;letter-spacing:0.000px">384</div>
<div style="left:1703.50px;top:760.26px;font-size:24.5px;line-height:24.5px;font-weight:400;color:#1E1A2B;letter-spacing:0.600px">sse</div>
<div style="left:2354.75px;top:760.26px;font-size:24.5px;line-height:24.5px;font-weight:400;color:#1E1A2B;letter-spacing:0.000px">140</div>
<div style="left:1702.50px;top:827.76px;font-size:24.5px;line-height:24.5px;font-weight:400;color:#1E1A2B;letter-spacing:0.600px">customssetransport</div>
<div style="left:2368.37px;top:827.76px;font-size:24.5px;line-height:24.5px;font-weight:400;color:#1E1A2B;letter-spacing:0.000px">34</div>
<div style="left:82.70px;top:925.45px;font-size:29.0px;line-height:29.0px;font-weight:700;color:#6A00FF;letter-spacing:-1.437px">Tools</div>
<div style="left:198.20px;top:921.05px;font-size:29.0px;line-height:29.0px;font-weight:700;color:#58616F;letter-spacing:-0.796px">Resources</div>
<div style="left:386.30px;top:921.05px;font-size:29.0px;line-height:29.0px;font-weight:700;color:#58616F;letter-spacing:-0.250px">Prompts</div>
<div style="left:91.00px;top:1039.64px;font-size:33.5px;line-height:33.5px;font-weight:700;color:#1E1A2B;letter-spacing:-1.278px">Most Used Tools</div>
<div style="left:894.00px;top:1039.64px;font-size:33.5px;line-height:33.5px;font-weight:700;color:#1E1A2B;letter-spacing:-1.226px">Slowest Tools</div>
<div style="left:1693.30px;top:1039.64px;font-size:33.5px;line-height:33.5px;font-weight:700;color:#1E1A2B;letter-spacing:-1.043px">Most Failing Tools</div>
<div style="left:92.16px;top:1111.58px;font-size:23.5px;line-height:23.5px;font-weight:400;color:#58616F;letter-spacing:2.200px">180</div>
<div style="left:92.16px;top:1132.46px;font-size:23.5px;line-height:23.5px;font-weight:400;color:#58616F;letter-spacing:2.200px">150</div>
<div style="left:92.16px;top:1153.34px;font-size:23.5px;line-height:23.5px;font-weight:400;color:#58616F;letter-spacing:2.200px">120</div>
<div style="left:107.43px;top:1174.22px;font-size:23.5px;line-height:23.5px;font-weight:400;color:#58616F;letter-spacing:2.200px">90</div>
<div style="left:107.43px;top:1195.10px;font-size:23.5px;line-height:23.5px;font-weight:400;color:#58616F;letter-spacing:2.200px">60</div>
<div style="left:107.43px;top:1215.98px;font-size:23.5px;line-height:23.5px;font-weight:400;color:#58616F;letter-spacing:2.200px">30</div>
<div style="left:175.30px;top:1271.56px;font-size:24.5px;line-height:24.5px;font-weight:400;color:#58616F;letter-spacing:0.923px">Jul 23rd</div>
<div style="left:349.25px;top:1271.56px;font-size:24.5px;line-height:24.5px;font-weight:400;color:#58616F;letter-spacing:1.188px">Jul 27th</div>
<div style="left:570.60px;top:1271.56px;font-size:24.5px;line-height:24.5px;font-weight:400;color:#58616F;letter-spacing:0.454px">Aug 1st</div>
<div style="left:99.50px;top:1340.76px;font-size:24.5px;line-height:24.5px;font-weight:400;color:#1E1A2B;letter-spacing:0.600px">multiply</div>
<div style="left:751.75px;top:1340.76px;font-size:24.5px;line-height:24.5px;font-weight:400;color:#1E1A2B;letter-spacing:0.000px">160</div>
<div style="left:99.50px;top:1408.26px;font-size:24.5px;line-height:24.5px;font-weight:400;color:#1E1A2B;letter-spacing:0.600px">divide</div>
<div style="left:765.37px;top:1408.26px;font-size:24.5px;line-height:24.5px;font-weight:400;color:#1E1A2B;letter-spacing:0.000px">32</div>
<div style="left:99.50px;top:1475.76px;font-size:24.5px;line-height:24.5px;font-weight:400;color:#1E1A2B;letter-spacing:0.600px">calculate</div>
<div style="left:765.37px;top:1475.76px;font-size:24.5px;line-height:24.5px;font-weight:400;color:#1E1A2B;letter-spacing:0.000px">17</div>
<div style="left:949.43px;top:1111.58px;font-size:23.5px;line-height:23.5px;font-weight:400;color:#58616F;letter-spacing:0.800px">3s</div>
<div style="left:928.23px;top:1132.46px;font-size:23.5px;line-height:23.5px;font-weight:400;color:#58616F;letter-spacing:0.800px">2.5s</div>
<div style="left:949.43px;top:1153.34px;font-size:23.5px;line-height:23.5px;font-weight:400;color:#58616F;letter-spacing:0.800px">2s</div>
<div style="left:928.23px;top:1174.22px;font-size:23.5px;line-height:23.5px;font-weight:400;color:#58616F;letter-spacing:0.800px">1.5s</div>
<div style="left:949.43px;top:1195.10px;font-size:23.5px;line-height:23.5px;font-weight:400;color:#58616F;letter-spacing:0.800px">1s</div>
<div style="left:901.32px;top:1215.98px;font-size:23.5px;line-height:23.5px;font-weight:400;color:#58616F;letter-spacing:0.800px">500ms</div>
<div style="left:1003.90px;top:1271.56px;font-size:24.5px;line-height:24.5px;font-weight:400;color:#58616F;letter-spacing:0.923px">Jul 23rd</div>
<div style="left:1171.65px;top:1271.56px;font-size:24.5px;line-height:24.5px;font-weight:400;color:#58616F;letter-spacing:1.188px">Jul 27th</div>
<div style="left:1385.00px;top:1271.56px;font-size:24.5px;line-height:24.5px;font-weight:400;color:#58616F;letter-spacing:0.454px">Aug 1st</div>
<div style="left:900.50px;top:1340.76px;font-size:24.5px;line-height:24.5px;font-weight:400;color:#1E1A2B;letter-spacing:0.600px">hello</div>
<div style="left:1534.32px;top:1340.76px;font-size:24.5px;line-height:24.5px;font-weight:400;color:#1E1A2B;letter-spacing:0.000px">3.01s</div>
<div style="left:900.50px;top:1408.26px;font-size:24.5px;line-height:24.5px;font-weight:400;color:#1E1A2B;letter-spacing:0.600px">add</div>
<div style="left:1486.66px;top:1408.26px;font-size:24.5px;line-height:24.5px;font-weight:400;color:#1E1A2B;letter-spacing:0.000px">594.81ms</div>
<div style="left:901.50px;top:1475.76px;font-size:24.5px;line-height:24.5px;font-weight:400;color:#1E1A2B;letter-spacing:0.600px">subtract</div>
<div style="left:1513.91px;top:1475.76px;font-size:24.5px;line-height:24.5px;font-weight:400;color:#1E1A2B;letter-spacing:0.000px">5.67ms</div>
<div style="left:1694.69px;top:1089.56px;font-size:23.5px;line-height:23.5px;font-weight:400;color:#58616F;letter-spacing:0.400px">150%</div>
<div style="left:1694.69px;top:1118.96px;font-size:23.5px;line-height:23.5px;font-weight:400;color:#58616F;letter-spacing:0.400px">120%</div>
<div style="left:1708.16px;top:1148.36px;font-size:23.5px;line-height:23.5px;font-weight:400;color:#58616F;letter-spacing:0.400px">90%</div>
<div style="left:1708.16px;top:1177.76px;font-size:23.5px;line-height:23.5px;font-weight:400;color:#58616F;letter-spacing:0.400px">60%</div>
<div style="left:1708.16px;top:1207.16px;font-size:23.5px;line-height:23.5px;font-weight:400;color:#58616F;letter-spacing:0.400px">30%</div>
<div style="left:1743.10px;top:1236.56px;font-size:23.5px;line-height:23.5px;font-weight:400;color:#58616F;letter-spacing:0.400px">0</div>
<div style="left:1793.90px;top:1271.56px;font-size:24.5px;line-height:24.5px;font-weight:400;color:#58616F;letter-spacing:0.923px">Jul 23rd</div>
<div style="left:1962.75px;top:1271.56px;font-size:24.5px;line-height:24.5px;font-weight:400;color:#58616F;letter-spacing:1.188px">Jul 27th</div>
<div style="left:2178.00px;top:1271.56px;font-size:24.5px;line-height:24.5px;font-weight:400;color:#58616F;letter-spacing:0.454px">Aug 1st</div>
<div style="left:1703.50px;top:1340.76px;font-size:24.5px;line-height:24.5px;font-weight:400;color:#1E1A2B;letter-spacing:0.600px">subtract</div>
<div style="left:2333.12px;top:1340.76px;font-size:24.5px;line-height:24.5px;font-weight:400;color:#1E1A2B;letter-spacing:0.000px">100%</div>
<div style="left:1702.50px;top:1408.26px;font-size:24.5px;line-height:24.5px;font-weight:400;color:#1E1A2B;letter-spacing:0.600px">add</div>
<div style="left:2326.32px;top:1408.26px;font-size:24.5px;line-height:24.5px;font-weight:400;color:#1E1A2B;letter-spacing:0.000px">12.5%</div>
<div style="left:1702.50px;top:1475.76px;font-size:24.5px;line-height:24.5px;font-weight:400;color:#1E1A2B;letter-spacing:0.600px">hello</div>
<div style="left:2360.37px;top:1475.76px;font-size:24.5px;line-height:24.5px;font-weight:400;color:#1E1A2B;letter-spacing:0.000px">0%</div>
<div style="left:94.50px;top:1590.56px;font-size:24.5px;line-height:24.5px;font-weight:700;color:#58616F;letter-spacing:-1.651px">TOOL NAME</div>
<div style="left:1511.00px;top:1591.46px;font-size:24.5px;line-height:24.5px;font-weight:700;color:#58616F;letter-spacing:-1.390px">REQUESTS</div>
<div style="left:1767.40px;top:1591.46px;font-size:24.5px;line-height:24.5px;font-weight:700;color:#58616F;letter-spacing:-1.535px">ERROR RATE</div>
<div style="left:2106.50px;top:1591.46px;font-size:24.5px;line-height:24.5px;font-weight:700;color:#58616F;letter-spacing:-1.608px">AVG</div>
<div style="left:2350.20px;top:1591.46px;font-size:24.5px;line-height:24.5px;font-weight:700;color:#58616F;letter-spacing:1.016px">P95</div>
<div style="left:91.70px;top:1676.95px;font-size:29.0px;line-height:29.0px;font-weight:400;color:#6A00FF;letter-spacing:0.886px">multiply</div>
<div style="left:1619.24px;top:1676.95px;font-size:29.0px;line-height:29.0px;font-weight:400;color:#1E1A2B;letter-spacing:0.000px">160</div>
<div style="left:1830.77px;top:1676.95px;font-size:29.0px;line-height:29.0px;font-weight:400;color:#1E1A2B;letter-spacing:0.000px">0%</div>
<div style="left:1881.01px;top:1676.95px;font-size:29.0px;line-height:29.0px;font-weight:400;color:#58616F;letter-spacing:0.000px">(0)</div>
<div style="left:2060.40px;top:1676.95px;font-size:29.0px;line-height:29.0px;font-weight:400;color:#1E1A2B;letter-spacing:0.000px">0.02ms</div>
<div style="left:2300.60px;top:1676.95px;font-size:29.0px;line-height:29.0px;font-weight:400;color:#1E1A2B;letter-spacing:0.000px">0.00ms</div>
<div style="left:91.70px;top:1763.25px;font-size:29.0px;line-height:29.0px;font-weight:400;color:#6A00FF;letter-spacing:0.551px">divide</div>
<div style="left:1635.37px;top:1763.25px;font-size:29.0px;line-height:29.0px;font-weight:400;color:#1E1A2B;letter-spacing:0.000px">32</div>
<div style="left:1830.77px;top:1763.25px;font-size:29.0px;line-height:29.0px;font-weight:400;color:#1E1A2B;letter-spacing:0.000px">0%</div>
<div style="left:1881.01px;top:1763.25px;font-size:29.0px;line-height:29.0px;font-weight:400;color:#58616F;letter-spacing:0.000px">(0)</div>
<div style="left:2060.40px;top:1763.25px;font-size:29.0px;line-height:29.0px;font-weight:400;color:#1E1A2B;letter-spacing:0.000px">0.03ms</div>
<div style="left:2300.60px;top:1763.25px;font-size:29.0px;line-height:29.0px;font-weight:400;color:#1E1A2B;letter-spacing:0.000px">0.00ms</div>
<div style="left:91.70px;top:1849.55px;font-size:29.0px;line-height:29.0px;font-weight:400;color:#6A00FF;letter-spacing:0.571px">calculate</div>
<div style="left:1635.37px;top:1849.55px;font-size:29.0px;line-height:29.0px;font-weight:400;color:#1E1A2B;letter-spacing:0.000px">17</div>
<div style="left:1830.77px;top:1849.55px;font-size:29.0px;line-height:29.0px;font-weight:400;color:#1E1A2B;letter-spacing:0.000px">0%</div>
<div style="left:1881.01px;top:1849.55px;font-size:29.0px;line-height:29.0px;font-weight:400;color:#58616F;letter-spacing:0.000px">(0)</div>
<div style="left:2060.40px;top:1849.55px;font-size:29.0px;line-height:29.0px;font-weight:400;color:#1E1A2B;letter-spacing:0.000px">1.29ms</div>
<div style="left:2300.60px;top:1849.55px;font-size:29.0px;line-height:29.0px;font-weight:400;color:#1E1A2B;letter-spacing:0.000px">3.65ms</div>
<div style="left:91.70px;top:1935.85px;font-size:29.0px;line-height:29.0px;font-weight:400;color:#6A00FF;letter-spacing:0.272px">add</div>
<div style="left:1635.37px;top:1935.85px;font-size:29.0px;line-height:29.0px;font-weight:400;color:#1E1A2B;letter-spacing:0.000px">16</div>
<div style="left:1790.46px;top:1935.85px;font-size:29.0px;line-height:29.0px;font-weight:400;color:#1E1A2B;letter-spacing:0.000px">12.5%</div>
<div style="left:1881.01px;top:1935.85px;font-size:29.0px;line-height:29.0px;font-weight:400;color:#6A00FF;letter-spacing:0.000px">(2)</div>
<div style="left:2028.14px;top:1935.85px;font-size:29.0px;line-height:29.0px;font-weight:400;color:#1E1A2B;letter-spacing:0.000px">594.81ms</div>
<div style="left:2324.76px;top:1935.85px;font-size:29.0px;line-height:29.0px;font-weight:400;color:#1E1A2B;letter-spacing:0.000px">3.16s</div>
</div>
</body></html>
